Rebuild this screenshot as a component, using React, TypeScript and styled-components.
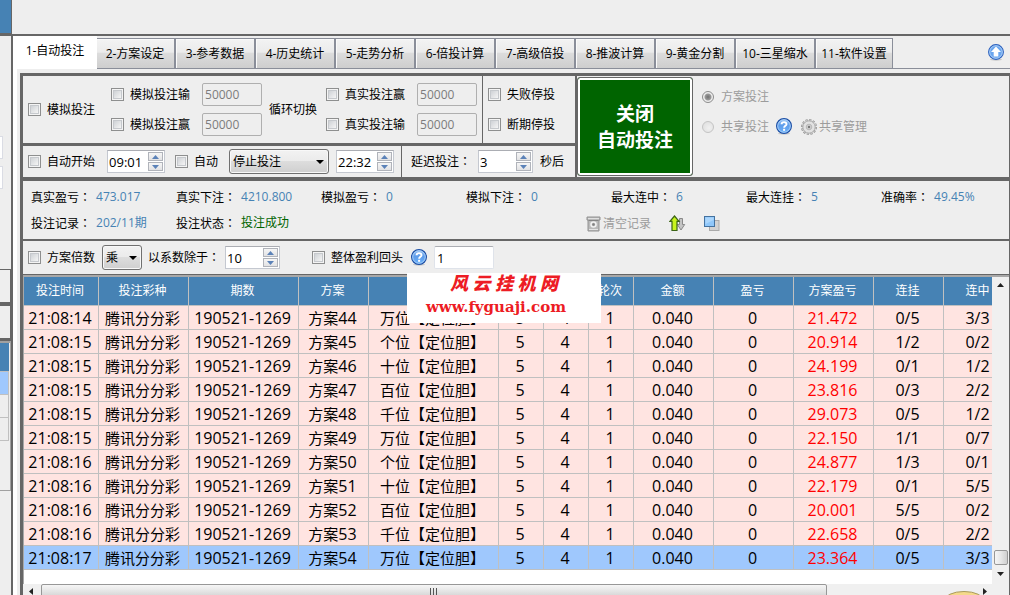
import React from "react";
import styled, { createGlobalStyle, css } from "styled-components";

const LINE = "#666666";
const FACE = "#eeeeee";
const BLUE = "#4682b4";
const MUTED = "#9c9c9c";

const GlobalStyle = createGlobalStyle`
  *, *::before, *::after { box-sizing: border-box; }
  body {
    margin: 0;
    background: ${FACE};
    color: #000;
    font: 12px/16px "Open Sans", "Noto Sans CJK SC", sans-serif;
  }
  button, input, select { font: inherit; color: inherit; margin: 0; }
`;

/* ---------- window frame ---------- */

const Window = styled.div`
  position: relative;
  display: flex;
  flex-direction: column;
  height: 100vh;
  overflow: hidden;
`;

const TopBand = styled.header`
  flex: none;
  height: 36px;
  border-bottom: 2px solid ${LINE};
`;

const TopBandSide = styled.div`
  width: 12px;
  height: 34px;
  background: ${BLUE};
  border-right: 1px solid ${LINE};
  border-bottom: 1px solid ${LINE};
`;

const Workspace = styled.div`
  flex: 1;
  display: flex;
  min-height: 0;
`;

const SideStrip = styled.aside`
  flex: none;
  width: 13px;
  border-right: 2px solid ${LINE};
  padding-top: 100px;
`;

const SideField = styled.div`
  width: 3px;
  height: 23px;
  margin-bottom: 7px;
  background: #fff;
  border: 1px solid #dadce4;
  border-left: 0;
`;

const SideBox = styled.div`
  width: 11px;
  height: 36px;
  border-top: 1px solid ${LINE};
  border-right: 1px solid ${LINE};
  border-bottom: 3px solid ${LINE};
`;

const SideGap = styled.div`
  height: 73px;
`;

const SideList = styled.div`
  width: 11px;
  height: 150px;
  border: solid #a0a0a0;
  border-width: 2px 1px 1px 0;
`;

const SideCell = styled.div<{ $fill: string; $tall?: boolean }>`
  width: 9px;
  height: ${(p) => (p.$tall ? 29 : 23)}px;
  background: ${(p) => p.$fill};
  border-right: ${(p) => (p.$tall ? "0" : "1px solid #c0c0c0")};
  border-bottom: 1px solid #c0c0c0;
`;

const Main = styled.main`
  flex: 1;
  min-width: 0;
  display: flex;
  flex-direction: column;
`;

/* ---------- tabs ---------- */

const TabBar = styled.nav`
  flex: none;
  display: flex;
  align-items: flex-end;
  height: 33px;
  border-bottom: 1px solid #8a8e99;
`;

const Tab = styled.button<{ $active?: boolean }>`
  flex: none;
  width: 80px;
  height: 30px;
  padding: 0;
  border: 1px solid #8a8e99;
  border-bottom: 0;
  box-shadow: inset 1px 1px 0 #fafafa;
  background: linear-gradient(#f3f3f3, #ebebeb 45%, #dcdcdc 50%, #cecece);
  &:last-of-type {
    width: 78px;
  }
  ${(p) =>
    p.$active &&
    css`
      position: relative;
      z-index: 1;
      width: 84px;
      height: 33px;
      margin: 0 -2px -1px 0;
      padding-bottom: 3px;
      border: 0;
      box-shadow: none;
      background: #fff;
    `}
`;

const TabList = styled.div`
  display: flex;
  align-items: flex-end;
`;

const CollapseButton = styled.button`
  margin: 0 6px 8px auto;
  width: 16px;
  height: 16px;
  padding: 0;
  border: 0;
  background: none;
`;

/* ---------- panels ---------- */

const Page = styled.section`
  flex: 1;
  min-height: 0;
  display: flex;
  flex-direction: column;
  border-left: 4px solid #fff;
  padding: 4px 0 0 3px;
`;

const Frame = styled.div`
  flex: 1;
  min-height: 0;
  display: flex;
  flex-direction: column;
  border: solid ${LINE};
  border-width: 3px 1px 0 3px;
`;

const Controls = styled.div`
  flex: none;
  display: flex;
  background: ${LINE};
  padding-bottom: 4px;
`;

const ControlRows = styled.div`
  flex: none;
  display: flex;
  flex-direction: column;
  gap: 3px;
  width: 552px;
`;

const ControlRow = styled.div`
  display: flex;
  gap: 1px;
`;

const Box = styled.div<{ $height: number; $grow?: boolean; $gap?: number; $end?: number }>`
  display: flex;
  align-items: center;
  flex: ${(p) => (p.$grow ? "1" : "none")};
  height: ${(p) => p.$height}px;
  gap: ${(p) => p.$gap ?? 0}px;
  padding: 0 ${(p) => p.$end ?? 5}px 0 5px;
  background: ${FACE};
`;

const Stack = styled.div`
  display: flex;
  flex-direction: column;
  gap: 7px;
`;

const Line = styled.div<{ $gap?: number }>`
  display: flex;
  align-items: center;
  gap: ${(p) => p.$gap ?? 0}px;
  height: 23px;
`;

const Check = styled.label`
  display: inline-flex;
  align-items: center;
  gap: 6px;
  white-space: nowrap;
`;

const CheckInput = styled.input.attrs({ type: "checkbox" })`
  appearance: none;
  width: 13px;
  height: 13px;
  border: 1px solid #8e8f8f;
  background: linear-gradient(135deg, #c4c8cd, #f4f4f4 80%);
  box-shadow: inset 0 0 0 1px #f4f4f4, inset 0 0 0 2px #c6c9cd;
`;

const RadioInput = styled.input.attrs({ type: "radio" })`
  appearance: none;
  width: 12px;
  height: 12px;
  border: 1px solid #c4c4c4;
  border-radius: 50%;
  background: radial-gradient(circle at 60% 60%, #f0f0f0, #dcdcdc);
  &:checked {
    border-color: #8c8c8c;
    background: radial-gradient(circle, #707070 0, #9a9a9a 3px, #eee 4px);
  }
`;

const TextBox = styled.input<{ $dim?: boolean }>`
  width: 60px;
  height: 23px;
  padding: 0 2px;
  font-size: ${(p) => (p.$dim ? 12 : 13)}px;
  border: 1px solid ${(p) => (p.$dim ? "#afafaf" : "#dfe3ea")};
  border-top-color: ${(p) => (p.$dim ? "#afafaf" : "#abadb3")};
  border-radius: 2px;
  color: ${(p) => (p.$dim ? "#7c7c7c" : "#000")};
  background: ${(p) => (p.$dim ? FACE : "#fff")};
`;

const SpinBox = styled.span<{ $width: number }>`
  display: flex;
  align-items: center;
  width: ${(p) => p.$width}px;
  height: 23px;
  background: #fff;
  border: 1px solid #c4c8d0;
  border-top-color: #abadb3;
`;

const SpinField = styled.input`
  flex: 1;
  min-width: 0;
  height: 19px;
  padding: 0 0 0 1px;
  border: 0;
  background: none;
  font-size: 13px;
`;

const SpinButtons = styled.span`
  display: flex;
  flex-direction: column;
  gap: 1px;
  margin-right: 1px;
`;

const SpinButton = styled.button`
  display: flex;
  align-items: center;
  justify-content: center;
  width: 15px;
  height: 9px;
  padding: 0;
  border: 1px solid #b0b3ba;
  background: linear-gradient(#f6f6f6, #e2e2e4);
`;

const Picker = styled.span<{ $width: number }>`
  position: relative;
  display: inline-flex;
  width: ${(p) => p.$width}px;
  height: 25px;
`;

const PickerSelect = styled.select`
  appearance: none;
  width: 100%;
  height: 100%;
  padding: 0 4px 0 3px;
  border: 1px solid #707070;
  border-radius: 3px;
  box-shadow: inset 0 0 0 1px #f8f8f8;
  background: linear-gradient(#f2f2f2, #ebebeb 48%, #dddddd 50%, #cfcfcf);
`;

const PickerArrow = styled.svg`
  position: absolute;
  right: 5px;
  top: 11px;
  pointer-events: none;
`;

const Colon = styled.span`
  font-family: "Noto Sans CJK TC", sans-serif;
`;

const Label = styled.span`
  white-space: nowrap;
`;

const ActionFrame = styled.div`
  flex: none;
  display: flex;
  width: 118px;
  margin-left: 2px;
  padding-top: 1px;
  background: ${FACE};
`;

const ActionButton = styled.button`
  width: 116px;
  height: 99px;
  padding: 0;
  border: 1px solid ${LINE};
  border-radius: 3px;
  box-shadow: inset 0 0 0 2px #fff;
  background: #006400;
  color: #fff;
  font-size: 19px;
  font-weight: 700;
  line-height: 26px;
`;

const Modes = styled.div`
  flex: 1;
  display: flex;
  flex-direction: column;
  gap: 7px;
  padding: 9px 7px;
  background: ${FACE};
  color: ${MUTED};
`;

const Mode = styled.label`
  display: inline-flex;
  align-items: center;
  gap: 7px;
  white-space: nowrap;
`;

const GhostButton = styled.button`
  display: inline-flex;
  align-items: center;
  gap: 2px;
  padding: 0;
  border: 0;
  background: none;
  color: ${MUTED};
  white-space: nowrap;
`;

/* ---------- statistics ---------- */

const Stats = styled.div`
  flex: none;
  display: grid;
  grid-template-columns: repeat(4, 145px) 135px 135px 1fr;
  row-gap: 9px;
  align-items: center;
  padding: 8px;
  height: 60px;
  border-bottom: 2px solid ${LINE};
`;

const Stat = styled.div`
  display: flex;
  gap: 5px;
  white-space: nowrap;
`;

const StatValue = styled.output<{ $ok?: boolean }>`
  color: ${(p) => (p.$ok ? "#006400" : BLUE)};
`;

const StatTools = styled.div`
  grid-column: 4 / -1;
  display: flex;
  align-items: center;
  gap: 18px;
  padding-left: 120px;
`;

const Multiplier = styled.div`
  flex: none;
  display: flex;
  align-items: center;
  height: 34px;
  padding-left: 5px;
  border-bottom: 1px solid ${LINE};
`;

const Item = styled.div<{ $before: number }>`
  display: flex;
  align-items: center;
  margin-left: ${(p) => p.$before}px;
`;

/* ---------- record table ---------- */

const Records = styled.div`
  flex: none;
  display: flex;
  border: solid #a8a8a8;
  border-width: 2px 0 0 1px;
`;

const Viewport = styled.div`
  flex: 1;
  min-width: 0;
  overflow: hidden;
  padding-bottom: 14px;
  background: #fff;
`;

const Grid = styled.table`
  width: 990px;
  table-layout: fixed;
  border-collapse: separate;
  border-spacing: 0;
`;

const HeadCell = styled.th`
  height: 29px;
  padding: 0 2px 0 0;
  border: solid #c0c0c0;
  border-width: 0 1px 1px 0;
  background: ${BLUE};
  color: #fff;
  font-weight: 400;
`;

const Row = styled.tr<{ $selected?: boolean }>`
  background: ${(p) => (p.$selected ? "#9fc8fd" : "#ffe4e1")};
`;

const Cell = styled.td<{ $number?: boolean; $red?: boolean }>`
  height: 24px;
  padding: 1px 2px 0 0;
  border: solid #c0c0c0;
  border-width: 0 1px 1px 0;
  text-align: center;
  white-space: nowrap;
  font-size: ${(p) => (p.$number ? 16 : 15)}px;
  line-height: 22px;
  color: ${(p) => (p.$red ? "#ff0000" : "#000")};
`;

const Digits = styled.span`
  font-size: 16px;
`;

const VerticalBar = styled.div`
  flex: none;
  display: flex;
  flex-direction: column;
  align-items: center;
  width: 17px;
  padding: 6px 0 8px;
  gap: 7px;
  background: #f0f0f0;
`;

const VerticalThumb = styled.div`
  width: 14px;
  height: 15px;
  margin-top: auto;
  border: 1px solid #979797;
  border-radius: 2px;
  background: linear-gradient(90deg, #f6f6f6, #e6e6e6 50%, #cfcfcf);
`;

const HorizontalBar = styled.div`
  flex: none;
  display: flex;
  align-items: center;
  justify-content: space-between;
  height: 15px;
  padding: 0 22px 0 6px;
  background: #f0f0f0;
`;

const HorizontalThumb = styled.div`
  display: flex;
  align-items: center;
  justify-content: center;
  width: 82%;
  height: 15px;
  margin: 0 auto 0 8px;
  border: 1px solid #979797;
  border-radius: 2px;
  background: linear-gradient(#f6f6f6, #e4e4e4 50%, #cfcfcf);
`;

/* ---------- overlays ---------- */

const Watermark = styled.div`
  position: absolute;
  left: 407px;
  top: 273px;
  width: 194px;
  height: 50px;
  background: #fff;
  color: #ed1c24;
  text-align: center;
  white-space: nowrap;
`;

const WatermarkName = styled.div`
  font: italic 900 18px/22px "Liberation Serif", "Noto Sans CJK SC", serif;
`;

const WatermarkSite = styled.div`
  padding-right: 16px;
  font: 700 15px/24px "DejaVu Serif", serif;
`;

const CornerBadge = styled.svg`
  position: absolute;
  right: 28px;
  bottom: 0;
`;

/* ---------- icons ---------- */

const Arrow = ({ dir, color = "#222" }: { dir: "up" | "down" | "left" | "right"; color?: string }) => {
  const shapes = {
    up: "M0 4 L3.5 0 L7 4Z",
    down: "M0 0 L3.5 4 L7 0Z",
    left: "M4 0 L0 3.5 L4 7Z",
    right: "M0 0 L4 3.5 L0 7Z",
  };
  const tall = dir === "left" || dir === "right";
  return (
    <svg width={tall ? 4 : 7} height={tall ? 7 : 4} aria-hidden="true">
      <path d={shapes[dir]} fill={color} />
    </svg>
  );
};

const HelpIcon = () => (
  <svg width="16" height="17" viewBox="0 0 16 17" role="img" aria-label="帮助">
    <defs>
      <linearGradient id="help" x1="0" y1="0" x2="0" y2="1">
        <stop offset="0" stopColor="#9cc6f6" />
        <stop offset="0.45" stopColor="#5e9cea" />
        <stop offset="1" stopColor="#6bb2fb" />
      </linearGradient>
    </defs>
    <ellipse cx="8" cy="15.5" rx="6" ry="1.2" fill="#c8c8c8" />
    <circle cx="8" cy="8" r="7.4" fill="url(#help)" stroke="#1d4fa5" strokeWidth="1.2" />
    <circle cx="8" cy="8" r="6.3" fill="none" stroke="#b9dafb" strokeWidth="0.8" />
    <path d="M5.6 6.3 C5.6 3.4 10.6 3.4 10.5 6.2 C10.4 7.8 8.2 7.9 8.1 9.7" fill="none" stroke="#fff" strokeWidth="1.9" />
    <rect x="7.1" y="10.8" width="2" height="2" fill="#fff" />
  </svg>
);

const UpIcon = () => (
  <svg width="16" height="17" viewBox="0 0 16 17" aria-hidden="true">
    <ellipse cx="8" cy="15.5" rx="6" ry="1.2" fill="#c8c8c8" />
    <circle cx="8" cy="8" r="7.4" fill="#6aa5ee" stroke="#2f62bd" strokeWidth="1.1" />
    <circle cx="8" cy="8" r="6.3" fill="none" stroke="#bcdafa" strokeWidth="0.8" />
    <path d="M8 2.6 L13 8 H10.3 V12.6 H5.7 V8 H3Z" fill="#fff" />
  </svg>
);

const GearIcon = () => (
  <svg width="16" height="16" viewBox="0 0 16 16" aria-hidden="true">
    <circle cx="8" cy="8" r="7" fill="none" stroke="#8f8f8f" strokeWidth="2" strokeDasharray="2.2 1.46" />
    <circle cx="8" cy="8" r="6.2" fill="#e2e2e2" stroke="#9a9a9a" strokeWidth="0.8" />
    <circle cx="8" cy="8" r="6.9" fill="none" stroke="#dcdcdc" strokeWidth="0.9" strokeDasharray="1.4 2.21" strokeDashoffset="-0.4" />
    <circle cx="8" cy="8" r="2.8" fill="#d0d0d0" stroke="#b0b0b0" strokeWidth="0.8" />
    <circle cx="8" cy="8" r="1.2" fill="#777" />
  </svg>
);

const BinIcon = () => (
  <svg width="15" height="16" viewBox="0 0 15 16" aria-hidden="true">
    <path d="M1 1 H14 V4 H13 V15 H2 V4 H1Z" fill="#b9b9b9" stroke="#929292" />
    <path d="M2 2.5 H13" stroke="#e0e0e0" />
    <path d="M2.5 4.5 H12.5" stroke="#858585" />
    <circle cx="7.5" cy="8.5" r="2.5" fill="none" stroke="#f0f0f0" strokeWidth="1.6" />
    <circle cx="7.5" cy="8.5" r="1.2" fill="#808080" />
    <path d="M3 13.5 H12" stroke="#e4e4e4" />
  </svg>
);

const SortIcon = () => (
  <svg width="17" height="17" viewBox="0 0 17 17" aria-hidden="true">
    <path d="M10.5 3.5 H13.5 V9.5 H15.7 L12 15 L8.3 9.5 H10.5Z" fill="#c4c4c4" stroke="#898989" />
    <path d="M5.5 1 L10 6.3 H8 V15.5 H3 V6.3 H1Z" fill="#c8f51c" stroke="#3c6416" strokeWidth="1.2" />
  </svg>
);

const LayersIcon = () => (
  <svg width="16" height="16" viewBox="0 0 16 16" aria-hidden="true">
    <rect x="5.5" y="4.5" width="9.5" height="10" fill="#d2d2d2" stroke="#aaa" />
    <rect x="0.5" y="0.5" width="10" height="10" fill="#8fc7fa" stroke="#44729f" />
    <path d="M1.5 1.5 H9.5 V4 L1.5 8Z" fill="#abd6fc" />
  </svg>
);

/* ---------- composed controls ---------- */

const CheckField = ({ text }: { text: string }) => (
  <Check>
    <CheckInput />
    {text}
  </Check>
);

const LimitLine = ({ text }: { text: string }) => (
  <Line $gap={12}>
    <CheckField text={text} />
    <TextBox $dim disabled defaultValue="50000" aria-label={text} />
  </Line>
);

const Spinner = ({ value, width, label }: { value: string; width: number; label: string }) => (
  <SpinBox $width={width}>
    <SpinField defaultValue={value} aria-label={label} />
    <SpinButtons>
      <SpinButton aria-label="增加">
        <Arrow dir="up" color="#5b82b8" />
      </SpinButton>
      <SpinButton aria-label="减少">
        <Arrow dir="down" color="#5b82b8" />
      </SpinButton>
    </SpinButtons>
  </SpinBox>
);

const Select = ({ value, width, label }: { value: string; width: number; label: string }) => (
  <Picker $width={width}>
    <PickerSelect aria-label={label}>
      <option>{value}</option>
    </PickerSelect>
    <PickerArrow width="8" height="4" aria-hidden="true">
      <path d="M0 0 H8 L4 4Z" fill="#000" />
    </PickerArrow>
  </Picker>
);

const Caption = ({ text }: { text: string }) => (
  <Label>
    {text}
    <Colon>：</Colon>
  </Label>
);

/* ---------- data ---------- */

const tabs = [
  "1-自动投注", "2-方案设定", "3-参考数据", "4-历史统计", "5-走势分析", "6-倍投计算",
  "7-高级倍投", "8-推波计算", "9-黄金分割", "10-三星缩水", "11-软件设置",
];

const stats: [string, string][] = [
  ["真实盈亏", "473.017"],
  ["真实下注", "4210.800"],
  ["模拟盈亏", "0"],
  ["模拟下注", "0"],
  ["最大连中", "6"],
  ["最大连挂", "5"],
  ["准确率", "49.45%"],
];

const columns: [string, number][] = [
  ["投注时间", 75], ["投注彩种", 90], ["期数", 110], ["方案", 70], ["", 130], ["", 45], ["", 45],
  ["轮次", 45], ["金额", 80], ["盈亏", 80], ["方案盈亏", 80], ["连挂", 70], ["连中", 70],
];

const records = [
  ["21:08:14", "44", "万", "21.472", "0/5", "3/3"],
  ["21:08:15", "45", "个", "20.914", "1/2", "0/2"],
  ["21:08:15", "46", "十", "24.199", "0/1", "1/2"],
  ["21:08:15", "47", "百", "23.816", "0/3", "2/2"],
  ["21:08:15", "48", "千", "29.073", "0/5", "1/2"],
  ["21:08:15", "49", "万", "22.150", "1/1", "0/7"],
  ["21:08:16", "50", "个", "24.877", "1/3", "0/1"],
  ["21:08:16", "51", "十", "22.179", "0/1", "5/5"],
  ["21:08:16", "52", "百", "20.001", "5/5", "0/2"],
  ["21:08:16", "53", "千", "22.658", "0/5", "2/2"],
  ["21:08:17", "54", "万", "23.364", "0/5", "3/3"],
];

export default function App() {
  return (
    <Window>
      <GlobalStyle />
      <TopBand>
        <TopBandSide />
      </TopBand>
      <Workspace>
        <SideStrip>
          <SideField />
          <SideField />
          <SideGap />
          <SideBox />
          <SideBox />
          <SideList>
            <SideCell $fill={BLUE} $tall />
            <SideCell $fill="#9fc8fd" />
            <SideCell $fill={FACE} />
            <SideCell $fill={FACE} />
          </SideList>
        </SideStrip>
        <Main>
          <TabBar>
            <TabList>
              {tabs.map((name, i) => (
                <Tab key={name} $active={i === 0}>
                  {name}
                </Tab>
              ))}
            </TabList>
            <CollapseButton aria-label="收起">
              <UpIcon />
            </CollapseButton>
          </TabBar>
          <Page>
            <Frame>
              <Controls>
                <ControlRows>
                  <ControlRow>
                    <Box $height={67}>
                      <CheckField text="模拟投注" />
                      <Item $before={16}>
                        <Stack>
                          <LimitLine text="模拟投注输" />
                          <LimitLine text="模拟投注赢" />
                        </Stack>
                      </Item>
                      <Item $before={7}>
                        <Label>循环切换</Label>
                      </Item>
                      <Item $before={9}>
                        <Stack>
                          <LimitLine text="真实投注赢" />
                          <LimitLine text="真实投注输" />
                        </Stack>
                      </Item>
                    </Box>
                    <Box $height={67} $grow>
                      <Stack>
                        <Line>
                          <CheckField text="失败停投" />
                        </Line>
                        <Line>
                          <CheckField text="断期停投" />
                        </Line>
                      </Stack>
                    </Box>
                  </ControlRow>
                  <ControlRow>
                    <Box $height={31} $end={7}>
                      <CheckField text="自动开始" />
                      <Item $before={12}>
                        <Spinner value="09:01" width={58} label="自动开始时间" />
                      </Item>
                      <Item $before={10}>
                        <CheckField text="自动" />
                      </Item>
                      <Item $before={11}>
                        <Select value="停止投注" width={100} label="自动操作" />
                      </Item>
                      <Item $before={7}>
                        <Spinner value="22:32" width={58} label="自动操作时间" />
                      </Item>
                    </Box>
                    <Box $height={31} $grow $gap={7}>
                      <Item $before={4}>
                        <Caption text="延迟投注" />
                      </Item>
                      <Spinner value="3" width={55} label="延迟投注" />
                      <Label>秒后</Label>
                    </Box>
                  </ControlRow>
                </ControlRows>
                <ActionFrame>
                  <ActionButton>
                    关闭
                    <br />
                    自动投注
                  </ActionButton>
                </ActionFrame>
                <Modes>
                  <Line>
                    <Mode>
                      <RadioInput name="mode" defaultChecked disabled />
                      方案投注
                    </Mode>
                  </Line>
                  <Line $gap={7}>
                    <Mode>
                      <RadioInput name="mode" disabled />
                      共享投注
                    </Mode>
                    <HelpIcon />
                    <Item $before={2}>
                      <GhostButton>
                        <GearIcon />
                        共享管理
                      </GhostButton>
                    </Item>
                  </Line>
                </Modes>
              </Controls>

              <Stats>
                {stats.map(([name, value]) => (
                  <Stat key={name}>
                    <Caption text={name} />
                    <StatValue>{value}</StatValue>
                  </Stat>
                ))}
                <Stat>
                  <Caption text="投注记录" />
                  <StatValue>202/11期</StatValue>
                </Stat>
                <Stat>
                  <Caption text="投注状态" />
                  <StatValue $ok>投注成功</StatValue>
                </Stat>
                <StatTools>
                  <GhostButton>
                    <BinIcon />
                    清空记录
                  </GhostButton>
                  <GhostButton aria-label="排序">
                    <SortIcon />
                  </GhostButton>
                  <GhostButton aria-label="窗口">
                    <LayersIcon />
                  </GhostButton>
                </StatTools>
              </Stats>

              <Multiplier>
                <CheckField text="方案倍数" />
                <Item $before={7}>
                  <Select value="乘" width={40} label="倍数方式" />
                </Item>
                <Item $before={6}>
                  <Caption text="以系数除于" />
                </Item>
                <Item $before={5}>
                  <Spinner value="10" width={55} label="系数" />
                </Item>
                <Item $before={32}>
                  <CheckField text="整体盈利回头" />
                </Item>
                <Item $before={8}>
                  <HelpIcon />
                </Item>
                <Item $before={7}>
                  <TextBox defaultValue="1" aria-label="整体盈利回头" />
                </Item>
              </Multiplier>

              <Records>
                <Viewport>
                  <Grid>
                    <colgroup>
                      {columns.map(([, width], i) => (
                        <col key={i} width={width} />
                      ))}
                    </colgroup>
                    <thead>
                      <tr>
                        {columns.map(([name], i) => (
                          <HeadCell key={i}>{name}</HeadCell>
                        ))}
                      </tr>
                    </thead>
                    <tbody>
                      {records.map(([time, plan, place, profit, miss, hit], i) => (
                        <Row key={plan} $selected={i === records.length - 1}>
                          <Cell $number>{time}</Cell>
                          <Cell>腾讯分分彩</Cell>
                          <Cell $number>190521-1269</Cell>
                          <Cell>
                            方案<Digits>{plan}</Digits>
                          </Cell>
                          <Cell>{place}位【定位胆】</Cell>
                          <Cell $number>5</Cell>
                          <Cell $number>4</Cell>
                          <Cell $number>1</Cell>
                          <Cell $number>0.040</Cell>
                          <Cell $number>0</Cell>
                          <Cell $number $red>{profit}</Cell>
                          <Cell $number>{miss}</Cell>
                          <Cell $number>{hit}</Cell>
                        </Row>
                      ))}
                    </tbody>
                  </Grid>
                </Viewport>
                <VerticalBar>
                  <Arrow dir="up" />
                  <VerticalThumb />
                  <Arrow dir="down" />
                </VerticalBar>
              </Records>
              <HorizontalBar>
                <Arrow dir="left" />
                <HorizontalThumb>
                  <svg width="8" height="7" aria-hidden="true">
                    <path d="M0.5 0 V7 M3.5 0 V7 M6.5 0 V7" stroke="#555" />
                  </svg>
                </HorizontalThumb>
                <Arrow dir="right" />
              </HorizontalBar>
            </Frame>
          </Page>
        </Main>
      </Workspace>
      <Watermark>
        <WatermarkName>风 云 挂 机 网</WatermarkName>
        <WatermarkSite>www.fyguaji.com</WatermarkSite>
      </Watermark>
      <CornerBadge width="36" height="4" aria-hidden="true">
        <ellipse cx="18" cy="10" rx="20" ry="9.5" fill="#f5d98a" stroke="#a89a5c" />
      </CornerBadge>
    </Window>
  );
}
